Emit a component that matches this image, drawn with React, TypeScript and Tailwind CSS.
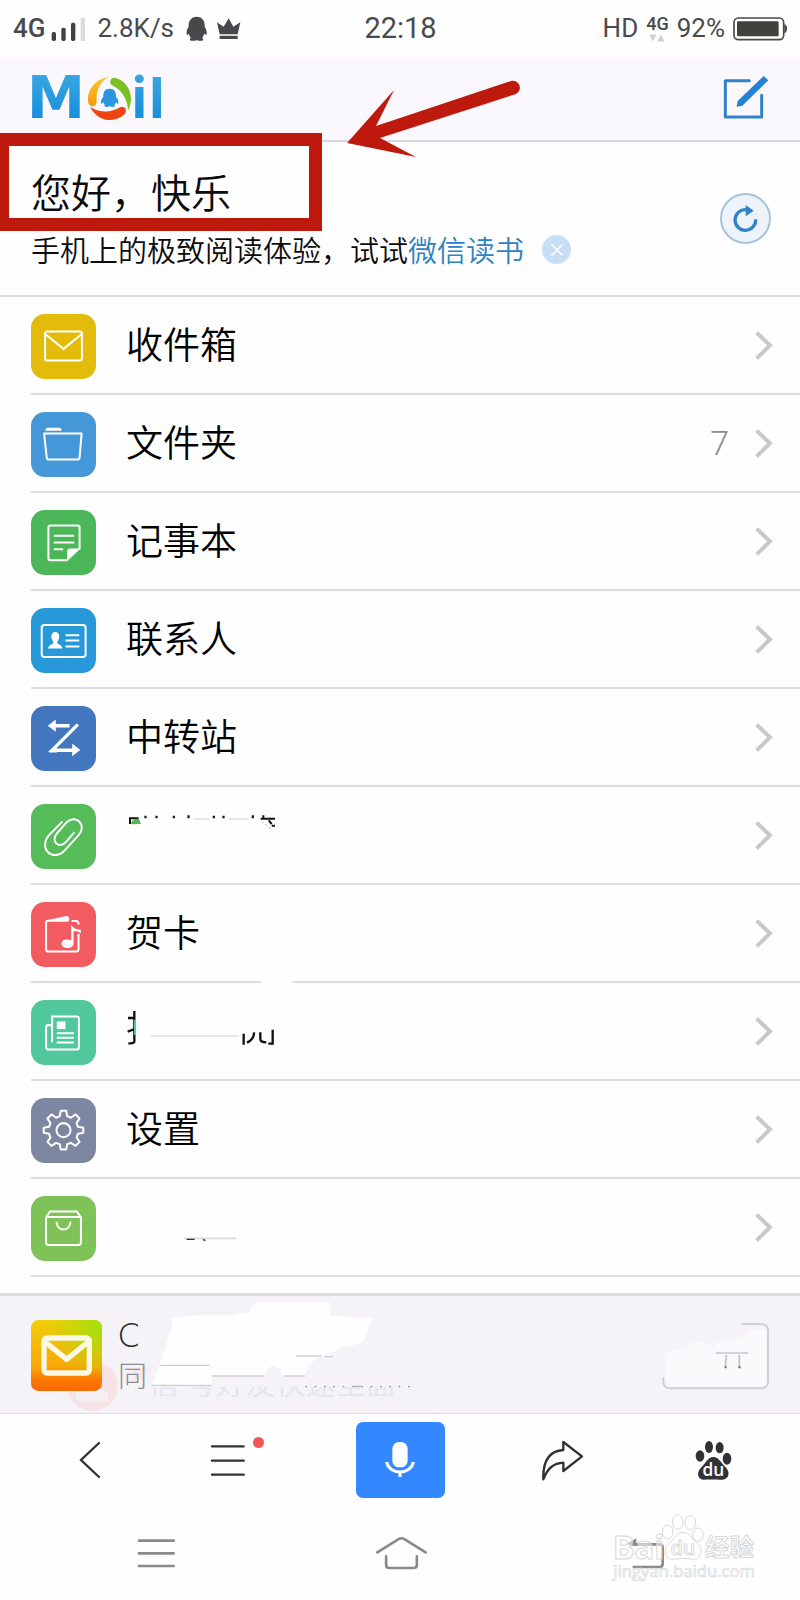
import type { ReactNode } from "react";
import { X } from "lucide-react";

/* ---------- glyphs for the menu tiles ---------- */

function Tile({ viewBox, className, children }: { viewBox: string; className: string; children: ReactNode }) {
  return (
    <span className={"mt-0.5 block size-[65px] shrink-0 overflow-hidden rounded-[14px] " + className}>
      <svg viewBox={viewBox} className="size-full" fill="none" stroke="white" strokeWidth="6" aria-hidden="true">
        {children}
      </svg>
    </span>
  );
}

const inboxTile = (
  <Tile viewBox="93 46 194 194" className="bg-[#e3bb0a]">
    <rect x="135" y="98" width="110" height="87" rx="6" />
    <path d="M137 107 L190 150 L243 107" />
  </Tile>
);

const folderTile = (
  <Tile viewBox="93 340 194 194" className="bg-[#4598d8]">
    <path d="M132 404 H244 L238 476 Q237 482 231 482 H147 Q141 482 140 476 Z" strokeLinejoin="round" />
    <path d="M136 396 Q136 387 143 387 H178 Q184 387 184 396 Z" fill="white" stroke="none" />
  </Tile>
);

const noteTile = (
  <Tile viewBox="93 633 194 194" className="bg-[#4bb759]">
    <path d="M201 783 H151 Q145 783 145 777 V685 Q145 679 151 679 H232 Q238 679 238 685 V750" />
    <path d="M161 710 H222 M161 730 H222 M161 750 H189" />
    <path d="M201 786 V756 Q201 748 209 748 H241 Z" fill="white" stroke="none" />
  </Tile>
);

const contactsTile = (
  <Tile viewBox="93 26 194 194" className="bg-[#2799d9]">
    <rect x="125" y="77" width="131" height="95" rx="8" />
    <path d="M196 107 H237 M196 123 H237 M196 141 H237" />
    <path
      d="M165 98 C174 98 178 105 177 114 C176 122 171 125 171 131 C178 136 186 137 187 147 H144 C145 137 153 136 160 131 C160 125 155 122 154 114 C153 105 157 98 165 98 Z"
      fill="white"
      stroke="none"
    />
  </Tile>
);

const transferTile = (
  <Tile viewBox="93 320 194 194" className="bg-[#4277c0]">
    <path d="M165 379 H208" strokeWidth="10" />
    <path d="M233 375 L156 452 H218" strokeWidth="10" />
    <path d="M143 379 L167 360 V397 Z M240 451 L216 432 V470 Z" fill="white" stroke="none" />
    <path d="M147 456 H170" />
  </Tile>
);

const clipTile = (
  <Tile viewBox="93 613 194 194" className="bg-[#56bc5a]">
    <path
      d="M185 667 L147 706 C132 722 131 744 144 757 C157 770 178 768 193 752 L235 706 C248 692 247 675 237 665 C227 655 211 656 199 668 L171 700 C161 712 162 724 169 731 C177 738 189 736 197 727 L221 699"
      strokeLinecap="round"
    />
  </Tile>
);

const cardTile = (
  <Tile viewBox="93 36 194 194" className="bg-[#f25b60]">
    <path d="M205 92 H144 Q138 92 138 98 V177 Q138 184 145 184 H227 Q235 184 235 176 V131" />
    <path d="M145 90 L198 78 Q207 77 207 86 V92 Z" fill="white" stroke="none" />
    <path d="M214 93 H227 Q235 93 235 103" />
    <path d="M213 104 C221 117 233 119 242 119 V129 C234 122 226 123 220 123 V160 C220 178 184 178 184 160 C184 148 202 144 213 151 Z" fill="white" stroke="none" />
  </Tile>
);

const newsTile = (
  <Tile viewBox="93 330 194 194" className="bg-[#50c89b]">
    <path d="M156 456 V379 H229 Q236 379 236 386 V471 Q236 478 229 478 H146 Q138 478 138 471 V412 Q138 405 145 405 H154" />
    <rect x="170" y="394" width="26" height="23" fill="white" stroke="none" />
    <path d="M170 429 H221 M170 443 H221 M170 457 H221" />
  </Tile>
);

const settingsTile = (
  <Tile viewBox="93 624 194 194" className="bg-[#7d87a2]">
    <circle cx="190" cy="720" r="21" />
    <path
      d="M182 662 H198 L201 678 L212 683 L226 673 L238 685 L229 699 L233 710 L249 713 V728 L233 731 L229 742 L238 755 L226 767 L212 758 L201 762 L198 778 H182 L179 762 L168 758 L154 767 L142 755 L151 742 L147 731 L131 728 V713 L147 710 L151 699 L142 685 L154 673 L168 683 L179 678 Z"
      strokeLinejoin="round"
    />
  </Tile>
);

const storeTile = (
  <Tile viewBox="93 916 194 194" className="bg-[#7fc257]">
    <path d="M138 980 L150 962 H230 L242 980 V1055 Q242 1062 235 1062 H145 Q138 1062 138 1055 Z" strokeLinejoin="round" />
    <path d="M138 979 H242" />
    <path d="M169 993 C170 1024 210 1024 211 993" />
  </Tile>
);

/* ---------- what is left of the wiped labels ---------- */

const attachmentsRemnant = (
  <svg viewBox="381 558 450 288" className="h-24 w-[150px]" aria-hidden="true">
    <path d="M393 675 V658 H419" fill="none" stroke="#111" strokeWidth="6" />
    <path d="M396 676 C396 664 410 658 420 660 L426 675 Z" fill="#4fb45a" />
    <path d="M436 650h7v8h-7z M469 650h7v8h-7z M521 650h7v8h-7z M565 649h7v9h-7z M641 650h7v8h-7z M670 650h7v8h-7z M758 649h7v9h-7z" fill="#222" />
    <path d="M583 660 H632 M688 660 H748" stroke="#dedede" strokeWidth="5" />
    <path d="M793 649 V662 M785 659 H828 M809 664 L818 675 M818 680 H828" stroke="#111" strokeWidth="6" fill="none" />
    <path d="M788 668 L820 692" stroke="#aaa" strokeWidth="3" strokeDasharray="6 8" />
  </svg>
);

const newsRemnant = (
  <svg viewBox="381 276 450 288" className="h-24 w-[150px] overflow-visible" aria-hidden="true">
    <path d="M786 262 H880 V282 H786 Z" fill="#fefefe" />
    <path d="M406 366 V458 Q405 463 388 463 M387 387 H407 M386 428 L407 420" fill="none" stroke="#111" strokeWidth="7" />
    <path d="M408 392 V438" stroke="#50c89b" strokeWidth="6" />
    <path d="M456 441 H720" stroke="#dedede" strokeWidth="5" />
    <path d="M734 434 V467 M765 430 Q766 450 744 461 M784 430 V450 Q784 460 802 460 M821 422 V464 H808" fill="none" stroke="#111" strokeWidth="7" />
  </svg>
);

const storeRemnant = (
  <svg viewBox="381 864 450 288" className="h-24 w-[150px]" aria-hidden="true">
    <path d="M555 1048 H712" stroke="#dcdcdc" strokeWidth="5" />
    <path d="M563 1051 H587 M612 1051 L619 1055" stroke="#333" strokeWidth="4" />
  </svg>
);

type MenuEntry = { id: string; title?: string; tile: ReactNode; remnant?: ReactNode; count?: number };

const menu: MenuEntry[] = [
  { id: "inbox", title: "收件箱", tile: inboxTile },
  { id: "folders", title: "文件夹", tile: folderTile, count: 7 },
  { id: "notes", title: "记事本", tile: noteTile },
  { id: "contacts", title: "联系人", tile: contactsTile },
  { id: "transfer", title: "中转站", tile: transferTile },
  { id: "attachments", tile: clipTile, remnant: attachmentsRemnant },
  { id: "cards", title: "贺卡", tile: cardTile },
  { id: "news", tile: newsTile, remnant: newsRemnant },
  { id: "settings", title: "设置", tile: settingsTile },
  { id: "store", tile: storeTile, remnant: storeRemnant },
];

/* ---------- sections ---------- */

function StatusBar() {
  return (
    <div className="grid h-[57px] grid-cols-[1fr_auto_1fr] items-center pr-3 pl-[13px] font-['Roboto',sans-serif] text-[26px] text-[#4a4a4c]">
      <div className="flex items-center">
        <span className="font-medium">4G</span>
        <svg viewBox="150 40 108 78" className="ml-1 h-[26px] w-9" aria-hidden="true">
          <rect x="155" y="88" width="13" height="27" rx="5" fill="#414143" />
          <rect x="184" y="75" width="13" height="40" rx="5" fill="#414143" />
          <rect x="213" y="60" width="13" height="55" rx="5" fill="#414143" />
          <rect x="242" y="45" width="13" height="70" rx="3" fill="#dcdcdc" />
        </svg>
        <span className="ml-3">2.8K/s</span>
        <svg viewBox="555 42 66 75" className="ml-3 h-[25px] w-[22px]" fill="#48484a" aria-hidden="true">
          <path d="M587 44 C604 44 612 57 611 74 C617 83 619 93 616 99 L609 95 C608 101 606 105 603 108 C607 110 608 114 605 116 H590 L587 113 L584 116 H569 C565 114 566 110 570 108 C567 105 565 101 564 95 L558 100 C555 93 557 83 563 74 C562 57 570 44 587 44 Z" />
        </svg>
        <svg viewBox="645 42 75 72" className="ml-2 h-6 w-[25px]" fill="#48484a" aria-hidden="true">
          <path d="M648 58 L668 71 L683 46 L697 71 L718 58 L710 94 H656 Z M656 98 H710 V108 H656 Z" />
        </svg>
      </div>
      <span className="text-[29px]">22:18</span>
      <div className="flex items-center justify-end">
        <span>HD</span>
        <span className="ml-2 flex flex-col items-center">
          <span className="text-lg leading-4 font-medium">4G</span>
          <svg viewBox="732 92 50 24" className="mt-0.5 h-2 w-4" fill="#cfcfcf" aria-hidden="true">
            <path d="M733 93 H755 L744 115 Z M758 115 H780 L769 93 Z" />
          </svg>
        </span>
        <span className="ml-2">92%</span>
        <svg viewBox="999 44 165 72" className="ml-2 h-6 w-[55px]" aria-hidden="true">
          <rect x="1002" y="47" width="149" height="65" rx="13" fill="none" stroke="#4a4a48" strokeWidth="5" />
          <rect x="1011" y="57" width="125" height="45" rx="4" fill="#41423d" />
          <path d="M1153 66 Q1161 67 1161 79 Q1161 91 1153 92 Z" fill="#4a4a48" />
        </svg>
      </div>
    </div>
  );
}

function MailLogo() {
  return (
    <svg viewBox="84 216 414 150" className="h-[50px] w-[138px] overflow-visible" role="img" aria-label="Mail">
      <defs>
        <linearGradient id="logoBlue" x1="0" y1="225" x2="0" y2="354" gradientUnits="userSpaceOnUse">
          <stop offset="0" stopColor="#3aa5e1" />
          <stop offset="1" stopColor="#168fdd" />
        </linearGradient>
        <linearGradient id="logoGold" x1="0" y1="232" x2="0" y2="320" gradientUnits="userSpaceOnUse">
          <stop offset="0" stopColor="#fcc62c" />
          <stop offset="1" stopColor="#f49b0c" />
        </linearGradient>
      </defs>
      <g fill="url(#logoBlue)" className="font-['Inter',sans-serif] font-bold">
        <text x="80" y="354" fontSize="176" className="font-['DejaVu_Sans',sans-serif]">M</text>
        <text x="395" y="354" fontSize="168">i</text>
        <text x="448" y="354" fontSize="168">l</text>
      </g>
      <circle cx="329" cy="296" r="75" fill="#faf8fc" />
      <path d="M326 232 C290 235 264 265 264 297 C264 312 268 319 278 319 C288 319 290 310 290 300 C288 270 300 245 326 232 Z" fill="url(#logoGold)" />
      <path d="M345 233 C375 240 393 268 393 297 C393 312 388 325 384 332 C384 300 365 270 340 258 C326 252 328 232 345 233 Z" fill="#7cc022" />
      <path d="M270 320 C285 350 310 360 330 360 C350 360 368 350 376 340 C382 328 372 316 360 322 C335 338 300 340 270 320 Z" fill="#f0430f" />
      <path
        d="M329 266 C343 266 349 276 348 290 C355 298 357 306 354 312 L348 307 C347 311 345 313 343 315 C346 317 345 320 342 320 H332 L329 317 L326 320 H316 C313 320 312 317 315 315 C313 313 311 311 310 307 L304 312 C301 306 303 298 310 290 C309 276 315 266 329 266 Z"
        fill="#2a97dc"
      />
    </svg>
  );
}

function Header() {
  return (
    <header className="flex h-[85px] items-center justify-between border-b-2 border-[#d9d7dc] bg-[#faf8fc] pr-[31px] pb-1 pl-7">
      <MailLogo />
      <button type="button" aria-label="写邮件">
        <svg viewBox="970 224 138 132" className="h-11 w-[46px]" fill="none" aria-hidden="true">
          <path d="M1049 241 H977 V350 H1086 V285" stroke="#2f83c9" strokeWidth="9" strokeLinecap="round" strokeLinejoin="round" />
          <path d="M1011 319 L1014 302 L1092 227 L1106 240 L1028 316 Z" fill="#2482d6" />
        </svg>
      </button>
    </header>
  );
}

function Greeting() {
  return (
    <section className="relative flex items-center justify-between border-b-2 border-[#dcdbde] pt-[21px] pr-[29px] pb-[25px] pl-[31px]">
      <div className="font-[350] text-[#0c0c0c]">
        <h1 className="text-[40px] leading-[56px]">您好，快乐</h1>
        <div className="mt-[10px] flex items-center text-[29px] leading-[41px]">
          <p>
            手机上的极致阅读体验，试试
            <a href="#weread" className="text-[#2e82c4]">
              微信读书
            </a>
          </p>
          <button
            type="button"
            aria-label="关闭"
            className="ml-[18px] flex size-[29px] items-center justify-center rounded-full bg-[#c7dff6] text-white"
          >
            <X size={20} />
          </button>
        </div>
      </div>
      <button
        type="button"
        aria-label="刷新"
        className="mt-1 flex size-[51px] items-center justify-center rounded-full border-2 border-[#a9c1d9] bg-[#eef3fb]"
      >
        <svg viewBox="997 250 78 87" className="h-[29px] w-[26px]" aria-hidden="true">
          <path d="M1065 296 A31 31 0 1 1 1036 267" fill="none" stroke="#2f83c9" strokeWidth="10" />
          <path d="M1035 253 L1059 270 L1035 287 Z" fill="#2f83c9" />
        </svg>
      </button>

      {/* hand-drawn marks: frame and arrow */}
      <div className="absolute -top-[9px] left-0 h-[98px] w-[322px] border-[13px] border-l-[9px] border-[#be190d]" />
      <svg viewBox="346 80 176 78" className="absolute -top-[62px] left-[346px] h-[78px] w-44" fill="#be190d" aria-hidden="true">
        <path d="M347 143 L394 90 L376 126 L511 81 A7 7 0 0 1 516 94 L380 138 L416 157 Z" />
      </svg>
    </section>
  );
}

function MenuList() {
  return (
    <ul className="pl-[31px]">
      {menu.map((entry) => (
        <li key={entry.id} className="border-b-2 border-[#dddcde]">
          <a href={"#" + entry.id} aria-label={entry.title ?? entry.id} className="flex h-24 items-center pr-[27px]">
            {entry.tile}
            <span className="mb-1 ml-[30px] text-[37px] leading-[50px] font-[350] text-black">{entry.title ?? entry.remnant}</span>
            {entry.count !== undefined && (
              <span className="ml-auto pr-[26px] font-['Roboto',sans-serif] text-[34px] font-light text-[#8e8e90]">{entry.count}</span>
            )}
            <svg
              viewBox="347 93 54 87"
              className={"h-[29px] w-[18px] shrink-0 " + (entry.count === undefined ? "ml-auto" : "")}
              fill="none"
              aria-hidden="true"
            >
              <path d="M352 98 L392 136 L352 175" stroke="#c8c7cb" strokeWidth="12" />
            </svg>
          </a>
        </li>
      ))}
    </ul>
  );
}

function AppBanner() {
  return (
    <aside className="relative mt-4 flex h-[121px] items-center justify-between border-t-[3px] border-b border-[#dedce0] bg-[#f5f3f7] pt-0.5 pr-[30px] pl-[31px]">
      {/* smudges left on the banner */}
      <svg viewBox="0 48 1320 351" className="absolute top-0 left-0 h-[117px] w-[440px]" aria-hidden="true">
        <circle cx="278" cy="318" r="75" fill="#f6e3e6" />
        <path d="M228 335 L245 318 L262 332 L285 315 L325 340 V362 H228 Z" fill="#f5f0f4" />
        <path d="M398 262 H455 L430 300 H398 Z" fill="#f7e9ec" />
        <path d="M515 113 L590 106 H705 L718 100 L748 97 Q758 68 770 66 L985 66 Q995 68 990 107 L1118 115 L1090 185 Q1075 194 1030 200 Q1000 216 970 228 Q935 240 924 262 L913 290 H848 Q840 260 820 258 Q800 260 790 290 H636 L634 318 H455 L480 252 L500 190 L515 145 Z" fill="#fefefe" />
        <path d="M480 256 H628 M636 288 H792 M852 288 H915 M888 228 H965 M975 230 H1000 M455 316 H634" stroke="#cfced3" strokeWidth="4" />
        <path d="M916 320 H1250" stroke="#8b8b90" strokeWidth="4" strokeDasharray="5 23" />
        <path d="M1060 319 H1085" stroke="#b5b5ba" strokeWidth="4" />
        <path d="M1120 135 H1320" stroke="#f0eef2" strokeWidth="2" />
      </svg>
      <div className="absolute top-[91px] left-[149px] flex h-[10px] w-[280px] items-end overflow-hidden text-[30px] leading-8 font-normal whitespace-nowrap text-[#e3e8ef]" aria-hidden="true">
        信 号好友快速全面
      </div>

      <div className="relative flex items-center">
        <svg viewBox="93 120 213 213" className="size-[71px]" aria-hidden="true">
          <defs>
            <linearGradient id="appBase" x1="0" y1="0" x2="0" y2="1">
              <stop offset="0" stopColor="#f0cf0a" />
              <stop offset="0.65" stopColor="#f9a806" />
              <stop offset="0.85" stopColor="#fb7804" />
              <stop offset="1" stopColor="#fa6a04" />
            </linearGradient>
            <radialGradient id="appGreen" cx="0.95" cy="0.1" r="0.7">
              <stop offset="0" stopColor="#a5e00c" />
              <stop offset="1" stopColor="#a5e00c" stopOpacity="0" />
            </radialGradient>
          </defs>
          <rect x="93" y="120" width="213" height="213" rx="22" fill="url(#appBase)" />
          <rect x="93" y="120" width="213" height="213" rx="22" fill="url(#appGreen)" />
          <rect x="132" y="174" width="136" height="105" rx="9" fill="none" stroke="#fbf8e4" strokeWidth="16" />
          <path d="M136 186 L200 238 L264 186" fill="none" stroke="#fbf8e4" strokeWidth="16" strokeLinejoin="round" />
        </svg>
        <div className="mb-1 ml-4 font-light">
          <p className="w-5 overflow-hidden font-['Lato',sans-serif] text-[34px] leading-10 text-[#2c2c2c]">C</p>
          <p className="w-[27px] overflow-hidden text-[29px] leading-10 text-[#8c8c92]">同</p>
        </div>
      </div>

      <button type="button" aria-label="打开" className="relative">
        <svg viewBox="786 125 324 204" className="h-[68px] w-[108px]" fill="none" aria-hidden="true">
          <path d="M795 215 Q860 205 880 185 Q925 180 942 210 L945 185 Q1020 180 1060 148 L1100 145 V320 H800 Z" fill="#f9f8fb" />
          <path d="M1024 131 H1082 Q1104 131 1104 153 V302 Q1104 324 1082 324 H812 Q790 324 790 302 V290" stroke="#d0cfd3" strokeWidth="6" />
          <path d="M947 218 H1045" stroke="#c6c5ca" strokeWidth="5" />
          <path d="M979 224 L976 262 M1018 224 V262" stroke="#c0bfc5" strokeWidth="5" />
          <path d="M974 258 H980 V264 H974 Z M1015 258 H1022 V264 H1015 Z" fill="#77777c" />
        </svg>
      </button>
    </aside>
  );
}

function BrowserBar() {
  return (
    <nav className="grid h-[92px] grid-cols-[132fr_144fr_200fr_126fr_174fr] place-items-center pl-6">
      <button type="button" aria-label="后退">
        <svg viewBox="237 92 66 114" className="h-[38px] w-[22px]" fill="none" aria-hidden="true">
          <path d="M297 98 L243 149 L297 200" stroke="#313136" strokeWidth="7" strokeLinecap="round" />
        </svg>
      </button>
      <button type="button" aria-label="菜单" className="relative">
        <svg viewBox="630 96 108 108" className="size-9" aria-hidden="true">
          <path d="M636 109 H731 M636 152 H731 M636 194 H731" stroke="#313136" strokeWidth="7" strokeLinecap="round" />
        </svg>
        <span className="absolute -top-[5px] left-[43px] size-[11px] rounded-full bg-[#f25454]" />
      </button>
      <button type="button" aria-label="语音" className="flex h-[76px] w-[89px] items-center justify-center rounded-[7px] bg-[#3388ff]">
        <svg viewBox="0 0 90 120" className="h-10 w-[30px]" aria-hidden="true">
          <rect x="22" y="6" width="46" height="76" rx="20" fill="white" />
          <path d="M5 66 C12 106 78 106 85 66 M45 94 V111" fill="none" stroke="white" strokeWidth="9" />
        </svg>
      </button>
      <button type="button" aria-label="分享">
        <svg viewBox="426 90 126 123" className="h-[41px] w-[42px]" fill="none" aria-hidden="true">
          <path
            d="M430 208 C428 145 455 122 490 120 V96 L546 139 L490 183 V158 C462 160 444 172 430 208 Z"
            stroke="#313136"
            strokeWidth="7"
            strokeLinejoin="round"
          />
        </svg>
      </button>
      <button type="button" aria-label="百度">
        <svg viewBox="888 90 111 120" className="h-10 w-[37px] overflow-visible" fill="#313136" aria-hidden="true">
          <ellipse cx="930" cy="111" rx="12" ry="18" />
          <ellipse cx="962" cy="113" rx="12" ry="17" />
          <ellipse cx="903" cy="138" rx="13" ry="17" />
          <ellipse cx="984" cy="146" rx="13" ry="18" />
          <path d="M943 141 C960 141 967 160 980 172 C995 187 990 209 970 209 C955 209 930 208 915 209 C897 209 891 190 905 174 C920 160 927 141 943 141 Z" />
          <text x="943" y="198" fontSize="52" textAnchor="middle" fill="white" className="font-['Open_Sans',sans-serif] font-semibold">
            du
          </text>
        </svg>
      </button>
    </nav>
  );
}

function SystemBar() {
  return (
    <nav className="relative grid h-[94px] grid-cols-[312fr_178fr_310fr] place-items-center">
      <button type="button" aria-label="最近任务">
        <svg viewBox="411 384 117 93" className="h-[31px] w-[39px]" aria-hidden="true">
          <path d="M417 392 H521 M417 430 H521 M417 468 H521" stroke="#8a8a8c" strokeWidth="8" strokeLinecap="round" />
        </svg>
      </button>
      <button type="button" aria-label="主屏幕">
        <svg viewBox="0 0 160 104" className="h-[34px] w-[53px]" fill="none" aria-hidden="true">
          <path d="M6 50 L70 10 Q80 4 90 10 L154 50 M33 62 V88 Q33 98 43 98 H117 Q127 98 127 88 V62" stroke="#8a8a8c" strokeWidth="8" strokeLinecap="round" />
        </svg>
      </button>
      <button type="button" aria-label="返回">
        <svg viewBox="672 380 117 93" className="h-[31px] w-[39px]" fill="none" aria-hidden="true">
          <path d="M692 467 H772 Q782 467 782 457 V409 Q782 399 772 399 H684" stroke="#8a8a8c" strokeWidth="8" />
          <path d="M672 399 L703 381 V403 Z" fill="#8a8a8c" />
        </svg>
      </button>

      {/* watermark over the system bar */}
      <svg viewBox="636 306 438 222" className="absolute top-[6px] right-[42px] h-[74px] w-[146px] overflow-visible" aria-hidden="true">
        <g fill="white" fillOpacity="0.5" stroke="#d9d9d9" strokeWidth="3">
          <ellipse cx="833" cy="336" rx="16" ry="22" />
          <ellipse cx="871" cy="338" rx="16" ry="21" />
          <ellipse cx="803" cy="366" rx="16" ry="21" />
          <ellipse cx="894" cy="374" rx="16" ry="20" />
          <path d="M849 367 C870 367 876 388 892 400 C912 418 902 449 878 448 C860 444 838 444 820 448 C796 449 786 420 806 402 C824 388 830 367 849 367 Z" />
          <text x="638" y="446" fontSize="98" className="font-['Open_Sans',sans-serif] font-bold">Bai</text>
          <text x="849" y="436" fontSize="60" textAnchor="middle" className="font-['Open_Sans',sans-serif] font-semibold">du</text>
          <text x="916" y="439" fontSize="73" className="font-bold">经验</text>
          <text x="640" y="502" fontSize="50" strokeWidth="2" className="font-['Open_Sans',sans-serif]">jingyan.baidu.com</text>
        </g>
      </svg>
    </nav>
  );
}

export default function App() {
  return (
    <div className="min-h-screen overflow-hidden bg-[#fefefe] font-['Noto_Sans_CJK_SC',sans-serif]">
      <StatusBar />
      <Header />
      <main>
        <Greeting />
        <MenuList />
        <AppBanner />
      </main>
      <BrowserBar />
      <SystemBar />
    </div>
  );
}
